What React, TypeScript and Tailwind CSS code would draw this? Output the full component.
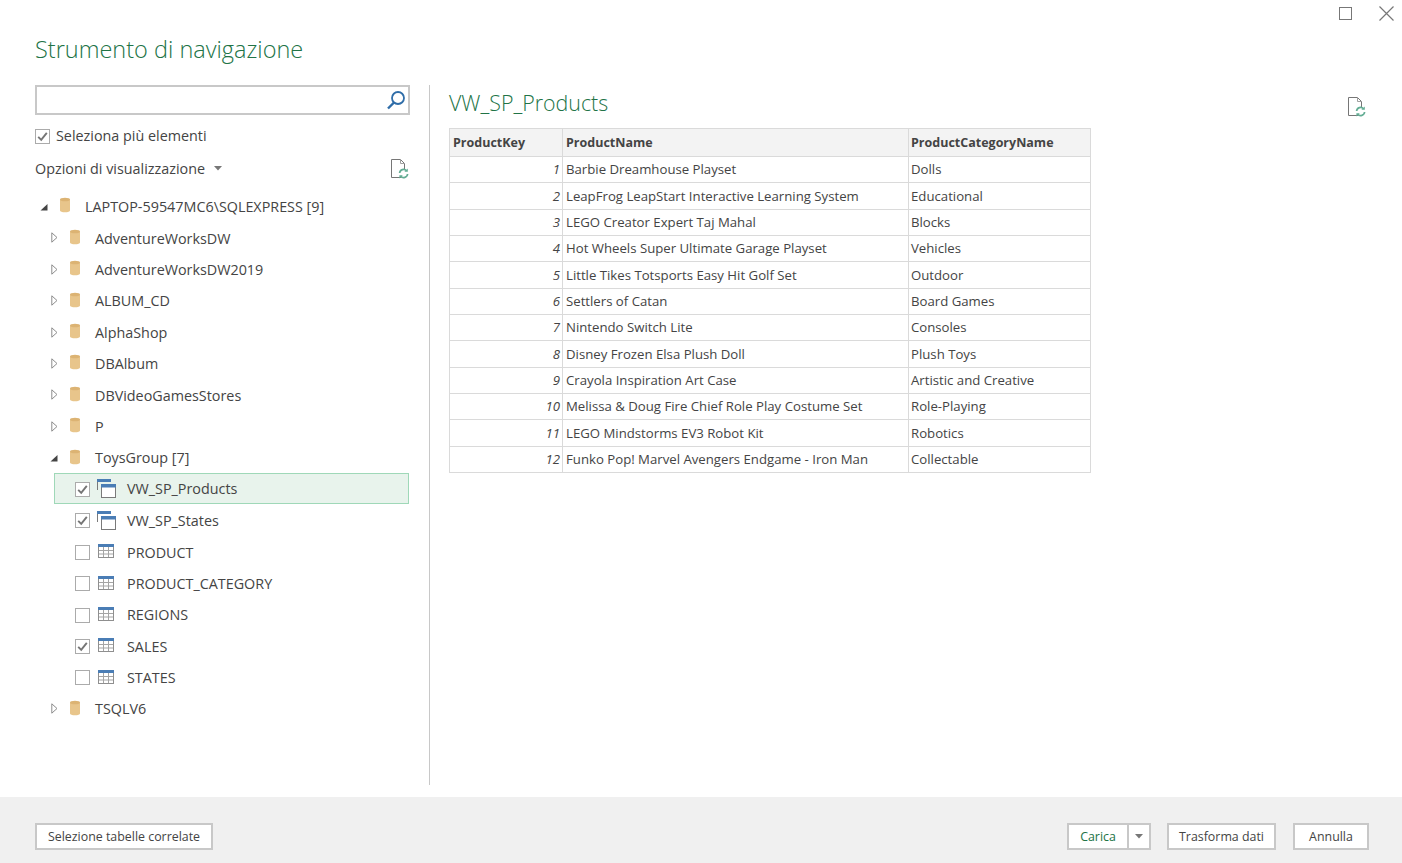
import React from "react";

const font = { fontFamily: '"Open Sans", "Noto Sans", sans-serif' };

const databases = ["AdventureWorksDW", "AdventureWorksDW2019", "ALBUM_CD", "AlphaShop", "DBAlbum", "DBVideoGamesStores", "P"];

const children = [
  { name: "VW_SP_Products", kind: "view", checked: true, selected: true },
  { name: "VW_SP_States", kind: "view", checked: true },
  { name: "PRODUCT", kind: "table", checked: false },
  { name: "PRODUCT_CATEGORY", kind: "table", checked: false },
  { name: "REGIONS", kind: "table", checked: false },
  { name: "SALES", kind: "table", checked: true },
  { name: "STATES", kind: "table", checked: false },
];

const rows = [
  ["Barbie Dreamhouse Playset", "Dolls"],
  ["LeapFrog LeapStart Interactive Learning System", "Educational"],
  ["LEGO Creator Expert Taj Mahal", "Blocks"],
  ["Hot Wheels Super Ultimate Garage Playset", "Vehicles"],
  ["Little Tikes Totsports Easy Hit Golf Set", "Outdoor"],
  ["Settlers of Catan", "Board Games"],
  ["Nintendo Switch Lite", "Consoles"],
  ["Disney Frozen Elsa Plush Doll", "Plush Toys"],
  ["Crayola Inspiration Art Case", "Artistic and Creative"],
  ["Melissa & Doug Fire Chief Role Play Costume Set", "Role-Playing"],
  ["LEGO Mindstorms EV3 Robot Kit", "Robotics"],
  ["Funko Pop! Marvel Avengers Endgame - Iron Man", "Collectable"],
];

function Db() {
  return (
    <svg width="12" height="16" viewBox="0 0 12 16" className="mb-[3px] shrink-0">
      <path d="M1 2.500v11c0 1 2.200 1.800 5 1.800s5-.8 5-1.800v-11z" fill="#e8c58b" />
      <ellipse cx="6" cy="2.500" rx="5" ry="1.800" fill="#dcb373" />
    </svg>
  );
}

function Check({ on }: { on: boolean }) {
  return (
    <span className="flex h-[15px] w-[15px] shrink-0 items-center justify-center border border-[#ababab] bg-white">
      {on && (
        <svg width="11" height="11" viewBox="0 0 11 11">
          <path d="M1.200 5.800 4.200 8.800 9.800 1.800" fill="none" stroke="#757575" strokeWidth="1.9" />
        </svg>
      )}
    </span>
  );
}

function Arrow({ open }: { open?: boolean }) {
  return open ? (
    <svg width="8" height="8" viewBox="0 0 8 8" className="shrink-0">
      <path d="M7.500 1v6.500H.5z" fill="#444" />
    </svg>
  ) : (
    <svg width="7" height="11" viewBox="0 0 7 11" className="mb-[1px] shrink-0">
      <path d="M.8.8 6 5.500.8 10.200z" fill="#fff" stroke="#8c8c8c" />
    </svg>
  );
}

function ViewIcon() {
  return (
    <svg width="19" height="19" viewBox="0 0 19 19" className="mb-[1px] shrink-0">
      <path d="M.5 11V1.500h12" fill="none" stroke="#7a7a7a" />
      <rect x="0" y="0" width="14" height="3" fill="#4a7db5" />
      <rect x="4.500" y="5.500" width="14" height="13" fill="#fff" stroke="#7a7a7a" />
      <rect x="4" y="5" width="15" height="3.500" fill="#4a7db5" />
    </svg>
  );
}

function TableIcon() {
  return (
    <svg width="16" height="14" viewBox="0 0 16 14" className="mb-[2px] ml-[1px] shrink-0">
      <rect x=".5" y=".5" width="15" height="13" fill="#fff" stroke="#8f8f8f" />
      <rect x="0" y="0" width="16" height="3" fill="#4a7db5" />
      <path d="M5.500 3v10M10.500 3v10M1 6.500h14M1 10h14" stroke="#a5a5a5" />
    </svg>
  );
}

function RefreshDoc() {
  return (
    <svg width="18" height="20" viewBox="0 0 18 20">
      <path d="M10.500 18.500H.5V.5h9l4 4v6" fill="none" stroke="#767676" />
      <path d="M9.500.5v4h4" fill="none" stroke="#a0a0a0" />
      <path d="M8.600 14a4 4 0 0 1 7-2.200M16.600 15a4 4 0 0 1-7 2.200" fill="none" stroke="#63ad94" strokeWidth="1.7" />
      <path d="M16.800 9.400v3.400h-3.400zM8.400 19.600v-3.400h3.400z" fill="#63ad94" />
    </svg>
  );
}

function Btn({ children }: { children: React.ReactNode }) {
  return (
    <button className="flex h-[27px] w-full items-center justify-center border-2 border-[#c8c8c8] bg-white pt-[2px] text-[12.4px] text-[#444]">
      {children}
    </button>
  );
}

export default function App() {
  return (
    <div style={font} className="flex h-[863px] w-[1402px] flex-col overflow-hidden bg-white text-[#444]">
      <div className="flex h-[27px] shrink-0 items-center justify-end gap-[27px] pr-[8px]">
        <span className="h-[13px] w-[13px] border-[1.5px] border-[#777]" />
        <svg width="15" height="15" viewBox="0 0 15 15">
          <path d="M.5.5l14 14M14.500.5l-14 14" stroke="#777" strokeWidth="1.2" />
        </svg>
      </div>

      <h1 className="ml-[35px] mt-[4px] h-[54px] shrink-0 text-[23.5px] font-light leading-[36px] text-[#217346]">
        Strumento di navigazione
      </h1>

      <div className="flex h-[700px] shrink-0">
        <div className="ml-[35px] w-[375px] shrink-0">
          <div className="flex h-[30px] items-center justify-end border-2 border-[#c8c8c8] pr-[2px]">
            <svg width="20" height="20" viewBox="0 0 20 20">
              <circle cx="12" cy="8" r="6" fill="none" stroke="#2f6da8" strokeWidth="1.8" />
              <path d="M8 12.500 2 18.500" stroke="#2f6da8" strokeWidth="2.4" />
            </svg>
          </div>
          <div className="mt-[13px] flex h-[16px] items-center gap-[6px] text-[14.35px]">
            <Check on />
            <span>Seleziona più elementi</span>
          </div>
          <div className="mt-[10px] flex h-[30px] items-center justify-between">
            <div className="flex items-center gap-[9px] text-[14.35px]">
              <span>Opzioni di visualizzazione</span>
              <svg width="8" height="5" viewBox="0 0 8 5">
                <path d="M0 0h8L4 4.500z" fill="#777" />
              </svg>
            </div>
            <span className="mr-[1px] flex">
              <RefreshDoc />
            </span>
          </div>

          <div className="mt-[6.8px] text-[14.35px]">
            <div className="flex h-[31.4px] items-center pl-[5px] pt-[1px]">
              <Arrow open />
              <span className="ml-[11px] mr-[14px] flex">
                <Db />
              </span>
              <span>LAPTOP-59547MC6\SQLEXPRESS [9]</span>
            </div>
            {databases.map((d) => (
              <div key={d} className="flex h-[31.4px] items-center pl-[16px] pt-[1px]">
                <Arrow />
                <span className="ml-[11px] mr-[14px] flex">
                  <Db />
                </span>
                <span>{d}</span>
              </div>
            ))}
            <div className="flex h-[31.4px] items-center pl-[15px] pt-[1px]">
              <Arrow open />
              <span className="ml-[11px] mr-[14px] flex">
                <Db />
              </span>
              <span>ToysGroup [7]</span>
            </div>
            {children.map((c) => (
              <div
                key={c.name}
                className={
                  c.selected
                    ? "mb-[1px] ml-[19px] mr-[1px] flex h-[30.4px] items-center border border-[#9fd8b8] bg-[#e8f3ec] pl-[20px] pt-[1px]"
                    : "ml-[19px] mr-[1px] flex h-[31.4px] items-center pl-[21px] pt-[1px]"
                }
              >
                <Check on={c.checked} />
                <span className="ml-[7px] mr-[11px] flex w-[19px]">
                  {c.kind === "view" ? <ViewIcon /> : <TableIcon />}
                </span>
                <span>{c.name}</span>
              </div>
            ))}
            <div className="flex h-[31.4px] items-center pl-[16px] pt-[1px]">
              <Arrow />
              <span className="ml-[11px] mr-[14px] flex">
                <Db />
              </span>
              <span>TSQLV6</span>
            </div>
          </div>
        </div>

        <div className="ml-[19px] w-px shrink-0 bg-[#c8c8c8]" />

        <div className="ml-[19px] flex-1 pr-[36px]">
          <div className="flex h-[43px] items-start justify-between">
            <h2 className="text-[21.4px] font-light leading-[36px] text-[#217346]">VW_SP_Products</h2>
            <span className="mt-[12px] flex">
              <RefreshDoc />
            </span>
          </div>
          <table className="w-[641px] table-fixed border-collapse text-[13.2px] text-[#444]">
            <colgroup>
              <col className="w-[113px]" />
              <col className="w-[346px]" />
              <col className="w-[182px]" />
            </colgroup>
            <thead>
              <tr className="h-[28px] bg-[#f3f3f3] text-[12.5px]">
                <th className="border border-[#dadada] px-[3px] pt-[1px] text-left font-bold">ProductKey</th>
                <th className="border border-[#dadada] px-[3px] pt-[1px] text-left font-bold">ProductName</th>
                <th className="border border-[#dadada] pl-[2px] pr-[3px] pt-[1px] text-left font-bold">ProductCategoryName</th>
              </tr>
            </thead>
            <tbody>
              {rows.map((r, i) => (
                <tr key={r[0]} className="h-[26.35px]">
                  <td className="border border-[#dadada] px-[2px] pt-[1px] text-right italic">{i + 1}</td>
                  <td className="border border-[#dadada] px-[3px] pt-[1px]">{r[0]}</td>
                  <td className="border border-[#dadada] pl-[2px] pr-[3px] pt-[1px]">{r[1]}</td>
                </tr>
              ))}
            </tbody>
          </table>
        </div>
      </div>

      <div className="mt-[12px] flex flex-1 items-center justify-between bg-[#f0f0f0] pl-[35px] pr-[33px] pt-[12px]">
        <div className="w-[178px]">
          <Btn>Selezione tabelle correlate</Btn>
        </div>
        <div className="flex items-center">
          <div className="mr-[16px] flex h-[27px] w-[84px] border-2 border-[#c8c8c8] bg-white pt-[2px] text-[12.4px]">
            <span className="flex flex-1 items-center justify-center text-[#217346]">Carica</span>
            <span className="mt-[-2px] flex w-[22px] items-center justify-center border-l-2 border-[#c8c8c8]">
              <svg width="8" height="5" viewBox="0 0 8 5">
                <path d="M0 0h8L4 4.500z" fill="#777" />
              </svg>
            </span>
          </div>
          <div className="mr-[17px] w-[109px]">
            <Btn>Trasforma dati</Btn>
          </div>
          <div className="w-[76px]">
            <Btn>Annulla</Btn>
          </div>
        </div>
      </div>
    </div>
  );
}
